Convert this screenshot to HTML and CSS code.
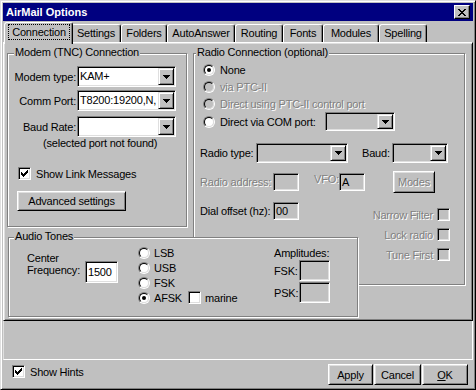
FILE: index.html
```html
<!DOCTYPE html>
<html lang="en">
  <head>
    <meta charset="utf-8">
    <title>AirMail Options</title>
    <link rel="stylesheet" href="styles.css">
  </head>
  <body>
    <div class="window">
      <div class="titlebar">
        <span class="title">AirMail Options</span>
        <span class="close">
          <svg width="8" height="7" viewBox="0 0 8 7" shape-rendering="crispEdges"><path d="M0 0h2v1h1v1h2v-1h1v-1h2v1h-1v1h-1v1h-1v1h1v1h1v1h1v1h-2v-1h-1v-1h-2v1h-1v1h-2v-1h1v-1h1v-1h1v-1h-1v-1h-1v-1h-1z"/></svg>
        </span>
      </div>

      <div class="tabs">
        <div class="tab active"><span class="focus">Connection</span></div>
        <div class="tab">Settings</div>
        <div class="tab">Folders</div>
        <div class="tab">AutoAnswer</div>
        <div class="tab">Routing</div>
        <div class="tab">Fonts</div>
        <div class="tab">Modules</div>
        <div class="tab">Spelling</div>
      </div>

      <div class="panel">
        <!-- modem -->
        <div class="group modem">
          <span class="legend">Modem (TNC) Connection</span>
          <div class="mrow">
            <span class="lbl">Modem type:</span>
            <div class="combo w-modem"><div class="val">KAM+</div><div class="drop"><svg width="7" height="4" viewBox="0 0 7 4" shape-rendering="crispEdges"><path d="M0 0h7v1h-1v1h-1v1h-1v1h-1v-1h-1v-1h-1v-1h-1z"/></svg></div></div>
          </div>
          <div class="mrow gap3">
            <span class="lbl">Comm Port:</span>
            <div class="combo w-modem"><div class="val">T8200:19200,N,</div><div class="drop"><svg width="7" height="4" viewBox="0 0 7 4" shape-rendering="crispEdges"><path d="M0 0h7v1h-1v1h-1v1h-1v1h-1v-1h-1v-1h-1v-1h-1z"/></svg></div></div>
          </div>
          <div class="mrow gap5">
            <span class="lbl">Baud Rate:</span>
            <div class="combo w-modem"><div class="val"></div><div class="drop"><svg width="7" height="4" viewBox="0 0 7 4" shape-rendering="crispEdges"><path d="M0 0h7v1h-1v1h-1v1h-1v1h-1v-1h-1v-1h-1v-1h-1z"/></svg></div></div>
          </div>
          <div class="note">(selected port not found)</div>
          <div class="check-row link">
            <span class="cb"><svg width="7" height="7" viewBox="0 0 7 7" shape-rendering="crispEdges"><path d="M6 0h1v1h-1zM5 1h2v1h-2zM0 2h1v1h-1zM4 2h3v1h-3zM0 3h2v1h-2zM3 3h3v1h-3zM0 4h5v1h-5zM1 5h3v1h-3zM2 6h1v1h-1z"/></svg></span>
            <span class="cb-text">Show Link Messages</span>
          </div>
          <button class="btn advanced">Advanced settings</button>
        </div>

        <!-- radio -->
        <div class="group radio">
          <span class="legend">Radio Connection (optional)</span>
          <div class="opt"><span class="rb on"><span></span></span><span>None</span></div>
          <div class="opt"><span class="rb off"><span></span></span><span class="dim">via PTC-II</span></div>
          <div class="opt"><span class="rb off"><span></span></span><span class="dim">Direct using PTC-II control port</span></div>
          <div class="opt com">
            <span class="rb"><span></span></span><span class="otext">Direct via COM port:</span>
            <div class="combo off h19 w-com"><div class="val"></div><div class="drop"><svg width="7" height="4" viewBox="0 0 7 4" shape-rendering="crispEdges"><path d="M0 0h7v1h-1v1h-1v1h-1v1h-1v-1h-1v-1h-1v-1h-1z"/></svg></div></div>
          </div>

          <div class="rtype">
            <span class="lbl-type">Radio type:</span>
            <div class="combo off h20 w-type"><div class="val"></div><div class="drop"><svg width="7" height="4" viewBox="0 0 7 4" shape-rendering="crispEdges"><path d="M0 0h7v1h-1v1h-1v1h-1v1h-1v-1h-1v-1h-1v-1h-1z"/></svg></div></div>
            <span class="lbl-baud">Baud:</span>
            <div class="combo off h20 w-baud"><div class="val"></div><div class="drop"><svg width="7" height="4" viewBox="0 0 7 4" shape-rendering="crispEdges"><path d="M0 0h7v1h-1v1h-1v1h-1v1h-1v-1h-1v-1h-1v-1h-1z"/></svg></div></div>
          </div>

          <div class="raddr">
            <span class="lbl-addr dim">Radio address:</span>
            <span class="field off small"></span>
            <span class="lbl-vfo dim">VFO:</span>
            <span class="field off small">A</span>
            <button class="btn modes dim" disabled>Modes</button>
          </div>

          <div class="lower">
            <div class="dial">
              <span class="lbl-addr">Dial offset (hz):</span>
              <span class="field off small">00</span>
            </div>
            <div class="checks">
              <div class="check-row"><span class="dim">Narrow Filter</span><span class="cb off"></span></div>
              <div class="check-row"><span class="dim">Lock radio</span><span class="cb off"></span></div>
              <div class="check-row"><span class="dim">Tune First</span><span class="cb off"></span></div>
            </div>
          </div>
        </div>

        <!-- audio -->
        <div class="group audio">
          <span class="legend">Audio Tones</span>
          <div class="freq">
            <span class="lbl-freq">Center<br>Frequency:</span>
            <span class="field freq-input">1500</span>
          </div>
          <div class="tones">
            <div class="aopt"><span class="rb"><span></span></span><span>LSB</span></div>
            <div class="aopt"><span class="rb"><span></span></span><span>USB</span></div>
            <div class="aopt"><span class="rb"><span></span></span><span>FSK</span></div>
            <div class="aopt">
              <span class="rb on"><span></span></span><span class="afsk">AFSK</span>
              <span class="cb"></span><span class="marine">marine</span>
            </div>
          </div>
          <div class="amps">
            <div class="amps-title">Amplitudes:</div>
            <div class="arow"><span class="lbl-amp">FSK:</span><span class="field off amp"></span></div>
            <div class="arow second"><span class="lbl-amp">PSK:</span><span class="field off amp"></span></div>
          </div>
        </div>
      </div>

      <div class="hint"></div>

      <div class="footer">
        <div class="check-row hints">
          <span class="cb"><svg width="7" height="7" viewBox="0 0 7 7" shape-rendering="crispEdges"><path d="M6 0h1v1h-1zM5 1h2v1h-2zM0 2h1v1h-1zM4 2h3v1h-3zM0 3h2v1h-2zM3 3h3v1h-3zM0 4h5v1h-5zM1 5h3v1h-3zM2 6h1v1h-1z"/></svg></span>
          <span class="cb-text">Show Hints</span>
        </div>
        <div class="buttons">
          <button class="btn apply">Apply</button>
          <button class="btn cancel">Cancel</button>
          <button class="btn ok"><u>O</u>K</button>
        </div>
      </div>
    </div>
  </body>
</html>
```

FILE: styles.css
```css
:root {
  --face: #c0c0c0;
  --light: #dfdfdf;
  --shadow: #808080;
  --title: #000080;
}

* {
  box-sizing: border-box;
}

body {
  margin: 0;
  background: var(--face);
  font: 11px "Liberation Sans", Arial, sans-serif;
  letter-spacing: -0.2px;
  color: #000;
}

button {
  font: inherit;
  letter-spacing: inherit;
  color: inherit;
  padding: 0;
}

.window {
  width: 476px;
  height: 390px;
  padding: 2px;
  background: var(--face);
  border: 1px solid;
  border-color: var(--light) #000 #000 var(--light);
  box-shadow: inset 1px 1px #fff, inset -1px -1px var(--shadow);
}

/* title bar */
.titlebar {
  height: 18px;
  display: flex;
  align-items: center;
  padding: 0 3px;
  background: var(--title);
  color: #fff;
}
.title {
  font-weight: bold;
  letter-spacing: 0;
}
.close {
  margin-left: auto;
  width: 16px;
  height: 14px;
  display: flex;
  align-items: center;
  justify-content: center;
  background: var(--face);
  border: 1px solid;
  border-color: #fff #000 #000 #fff;
  box-shadow: inset -1px -1px var(--shadow);
}

/* tabs */
.tabs {
  height: 21px;
  display: flex;
  align-items: flex-end;
  padding-left: 3px;
}
.tab {
  height: 18px;
  line-height: 16px;
  text-align: center;
  white-space: nowrap;
  border: 1px solid;
  border-bottom: 0;
  border-color: #fff #000 #000 #fff;
  border-radius: 3px 3px 0 0;
  box-shadow: inset -1px 0 var(--shadow);
}
.tab:nth-child(2) { width: 50px; }
.tab:nth-child(3) { width: 46px; }
.tab:nth-child(4) { width: 68px; }
.tab:nth-child(5) { width: 48px; }
.tab:nth-child(6) { width: 40px; }
.tab:nth-child(7) { width: 56px; }
.tab:nth-child(8) { width: 48px; }
.tab.active {
  position: relative;
  z-index: 1;
  width: 69px;
  height: 22px;
  margin: 0 -2px -2px;
  padding: 1px 2px 0 3px;
  background: var(--face);
}
.focus {
  display: block;
  line-height: 14px;
  border: 1px dotted #000;
}

/* tab page */
.panel {
  height: 279px;
  padding: 10px 0 0 3px;
  display: grid;
  grid-template-columns: 180px 6px 165px 107px;
  grid-template-rows: 174px 10px 48px 32px;
  border: 1px solid;
  border-color: #fff #000 #000 #fff;
  box-shadow: inset 1px 1px var(--light), inset -1px -1px var(--shadow);
}

.group {
  position: relative;
  border: 1px solid var(--shadow);
  box-shadow: inset 1px 1px #fff, 1px 1px #fff;
  white-space: nowrap;
}
.legend {
  position: absolute;
  top: -8px;
  line-height: 13px;
  padding: 0 1px;
  background: var(--face);
}

.dim {
  color: var(--shadow);
  text-shadow: 1px 1px #fff;
}

/* sunken controls */
.combo,
.field,
.cb {
  border: 1px solid;
  border-color: var(--shadow) #fff #fff var(--shadow);
  box-shadow: inset 1px 1px #000, inset -1px -1px var(--light);
  background: #fff;
}
.combo {
  display: flex;
  height: 21px;
  padding: 1px;
}
.combo .val {
  flex: 1;
  padding: 0 1px;
  line-height: 17px;
  overflow: hidden;
}
.combo.h20 { height: 20px; }
.combo.h19 { height: 19px; }
.combo.h20 .val { line-height: 16px; }
.drop {
  width: 16px;
  display: flex;
  align-items: center;
  justify-content: center;
  background: var(--face);
  border: 1px solid;
  border-color: var(--light) #000 #000 var(--light);
  box-shadow: inset 1px 1px #fff, inset -1px -1px var(--shadow);
}
.off {
  background: var(--face);
}
.field {
  display: flex;
  align-items: center;
  padding: 0 2px;
}
.cb {
  width: 13px;
  height: 13px;
  flex: none;
  display: flex;
  align-items: center;
  justify-content: center;
}
.cb.off {
  background: var(--face);
}

.rb {
  width: 12px;
  height: 12px;
  flex: none;
  border-radius: 50%;
  border: 1px solid;
  border-color: var(--shadow) #fff #fff var(--shadow);
}
.rb > span {
  display: block;
  width: 10px;
  height: 10px;
  border-radius: 50%;
  border: 1px solid;
  border-color: #000 var(--light) var(--light) #000;
  background: #fff;
}
.rb.off > span {
  background: var(--face);
}
.rb.on > span::after {
  content: "";
  display: block;
  width: 4px;
  height: 4px;
  margin: 2px;
  border-radius: 50%;
  background: #000;
}

.btn {
  height: 21px;
  display: flex;
  align-items: center;
  justify-content: center;
  background: var(--face);
  border: 1px solid;
  border-color: #fff #000 #000 #fff;
  box-shadow: inset 1px 1px var(--light), inset -1px -1px var(--shadow);
}

.check-row {
  display: flex;
  align-items: center;
  height: 13px;
  white-space: nowrap;
}
.cb-text {
  margin-left: 5px;
}

/* modem group */
.modem {
  grid-area: 1 / 1 / 2 / 2;
  padding-top: 12px;
}
.modem .legend { left: 6px; }
.mrow {
  display: flex;
  align-items: center;
  height: 21px;
}
.mrow.gap3 { margin-top: 3px; }
.mrow.gap5 { margin-top: 5px; }
.mrow .lbl {
  width: 68px;
  margin-right: 1px;
  text-align: right;
}
.w-modem { width: 99px; }
.note {
  margin-left: 35px;
  line-height: 13px;
}
.check-row.link {
  margin: 17px 0 0 10px;
}
.advanced {
  width: 109px;
  height: 20px;
  margin: 11px 0 0 9px;
}

/* radio group */
.radio {
  grid-area: 1 / 3 / 4 / 5;
  padding: 7px 0 0 6px;
}
.radio .legend { left: 2px; }
.opt {
  display: flex;
  align-items: center;
  height: 17px;
  padding-left: 3px;
}
.opt .rb {
  margin-right: 5px;
}
.opt.com { height: 19px; }
.otext { width: 105px; }
.w-com { width: 70px; }

.rtype {
  display: flex;
  align-items: center;
  height: 20px;
  margin-top: 12px;
}
.lbl-type { width: 56px; }
.w-type { width: 92px; }
.lbl-baud {
  width: 30px;
  margin-left: 14px;
}
.w-baud { width: 56px; }

.raddr {
  display: flex;
  align-items: center;
  height: 22px;
  margin-top: 8px;
}
.lbl-addr { width: 73px; }
.field.small {
  width: 26px;
  height: 18px;
}
.lbl-vfo {
  width: 25px;
  margin: -6px 0 0 15px;
}
.modes {
  width: 42px;
  height: 22px;
  margin-left: 28px;
}

.lower {
  display: flex;
  justify-content: space-between;
  align-items: flex-start;
  padding-right: 14px;
}
.dial {
  display: flex;
  align-items: center;
  height: 18px;
  margin-top: 9px;
}
.checks {
  display: flex;
  flex-direction: column;
  align-items: flex-end;
  gap: 7px;
  margin-top: 15px;
}
.checks .cb {
  margin-left: 4px;
}

/* audio group */
.audio {
  grid-area: 3 / 1 / 5 / 4;
  margin-left: 1px;
  display: flex;
  align-items: flex-start;
  background: var(--face);
}
.audio .legend { left: 5px; }
.freq {
  display: flex;
  align-items: flex-start;
  width: 109px;
  padding-left: 18px;
}
.lbl-freq {
  width: 58px;
  line-height: 12px;
  margin-top: 14px;
}
.freq-input {
  width: 33px;
  height: 22px;
  margin-top: 23px;
}
.tones {
  width: 136px;
  margin: 7px 0 0 20px;
}
.aopt {
  display: flex;
  align-items: center;
  height: 15px;
}
.aopt .rb {
  margin-right: 4px;
}
.afsk { width: 34px; }
.marine { margin-left: 4px; }
.amps {
  margin-top: 9px;
}
.amps-title {
  line-height: 13px;
}
.arow {
  display: flex;
  align-items: center;
  height: 21px;
}
.arow.second { margin-top: 1px; }
.lbl-amp { width: 25px; }
.field.amp {
  width: 31px;
  height: 21px;
}

/* bottom */
.hint {
  height: 39px;
  border-bottom: 1px solid #fff;
  border-right: 1px solid #fff;
  border-left: 1px solid var(--light);
}
.footer {
  height: 27px;
  display: flex;
  align-items: flex-start;
  padding: 4px 5px 0 9px;
}
.check-row.hints {
  margin-top: 1px;
}
.buttons {
  margin-left: auto;
  display: flex;
  gap: 1px;
}
.apply { width: 45px; }
.cancel { width: 47px; }
.ok { width: 46px; }
```
